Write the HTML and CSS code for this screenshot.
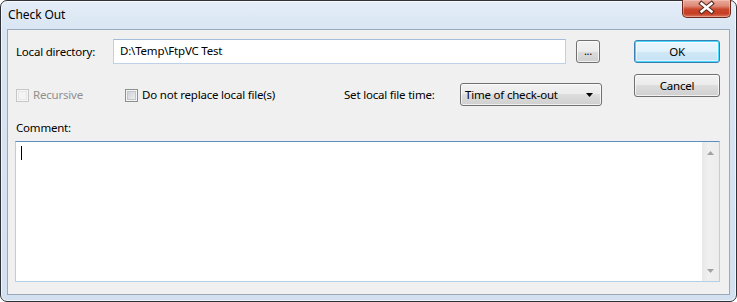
FILE: index.html
```html
<!DOCTYPE html>
<html>
<head>
<meta charset="utf-8">
<link rel="stylesheet" href="styles.css">
</head>
<body>
<div class="window">
  <div class="titlebar">
    <span class="title">Check Out</span>
    <div class="close">
      <svg width="49" height="18" viewBox="0 0 49 18">
        <path d="M19.5 4.5 L29.5 12.5 M29.5 4.5 L19.5 12.5" stroke="#5a2b22" stroke-width="4.6" stroke-linecap="square" fill="none"/>
        <path d="M19.5 4.5 L29.5 12.5 M29.5 4.5 L19.5 12.5" stroke="#ffffff" stroke-width="2.4" stroke-linecap="square" fill="none"/>
      </svg>
    </div>
  </div>
  <div class="client">
    <div class="top">
      <div class="form">
        <div class="row1">
          <span class="lbl-dir">Local directory:</span>
          <div class="input">D:\Temp\FtpVC Test</div>
          <div class="btn browse">...</div>
        </div>
        <div class="row2">
          <span class="check check-rec disabled"><span class="box"></span>Recursive</span>
          <span class="check check-rep"><span class="box"></span>Do not replace local file(s)</span>
          <span class="lbl-time">Set local file time:</span>
          <div class="select">
            <span>Time of check-out</span>
            <svg width="7" height="4" viewBox="0 0 7 4"><path d="M0 0 H7 L3.5 4 Z" fill="#000"/></svg>
          </div>
        </div>
      </div>
      <div class="buttons">
        <div class="btn default">OK</div>
        <div class="btn">Cancel</div>
      </div>
    </div>
    <div class="comment-label">Comment:</div>
    <div class="textarea">
      <div class="text-area-body"><span class="caret"></span></div>
      <div class="scrollbar">
        <svg width="7" height="4" viewBox="0 0 7 4"><path d="M0 4 H7 L3.5 0 Z" fill="#a3a3a3"/></svg>
        <svg width="7" height="4" viewBox="0 0 7 4"><path d="M0 0 H7 L3.5 4 Z" fill="#a3a3a3"/></svg>
      </div>
    </div>
  </div>
</div>
</body>
</html>
```

FILE: styles.css
```css
* { box-sizing: border-box; }
html, body { margin: 0; padding: 0; background: #ffffff; }
body {
  font-family: "Noto Sans", "Open Sans", sans-serif;
  font-size: 11.5px;
  letter-spacing: -0.2px;
  color: #000;
  width: 737px;
  height: 302px;
  overflow: hidden;
}
.window {
  width: 737px;
  height: 302px;
  border: 1px solid #2f3236;
  border-radius: 7px;
  background: linear-gradient(#e4edf8 0px, #d9e5f3 30px, #d2e0f0 100%);
  box-shadow: inset 0 0 0 1px rgba(255,255,255,0.65);
  padding: 0 6px 6px 6px;
  display: flex;
  flex-direction: column;
}
.titlebar {
  height: 28px;
  flex: none;
  display: flex;
  justify-content: space-between;
  align-items: flex-start;
}
.title {
  margin-top: 6px;
  margin-left: 1px;
  font-size: 12px;
  letter-spacing: -0.1px;
  line-height: 16px;
  color: #000;
}
.close {
  width: 49px;
  height: 18px;
  margin-top: -1px;
  margin-right: -1px;
  border: 1px solid #6b2a1d;
  border-top: none;
  border-radius: 0 0 5px 5px;
  background: linear-gradient(#e9aa9c 0%, #df8a76 35%, #c9452b 55%, #c63f24 80%, #d9775d 100%);
  box-shadow: inset 0 0 0 1px rgba(255,210,200,0.45);
  overflow: hidden;
}
.close svg { display: block; margin: -1px 0 0 -1px; }
.client {
  flex: 1;
  border: 1px solid #9aa8ba;
  background: #f0f0f0;
  padding: 0 9px 0 7px;
  display: flex;
  flex-direction: column;
}
.top {
  display: flex;
  padding-top: 9px;
}
.form {
  width: 587px;
  padding-left: 1px;
}
.row1 {
  display: flex;
  align-items: center;
  height: 25px;
}
.lbl-dir { width: 97px; }
.input {
  width: 453px;
  height: 25px;
  border: 1px solid #bdd2e9;
  border-top-color: #a3bcd9;
  background: #fff;
  padding: 0 6px;
  line-height: 22px;
}
.btn {
  height: 23px;
  border: 1px solid #707070;
  border-radius: 3px;
  background: linear-gradient(#f2f2f2 0%, #ebebeb 50%, #dddddd 50%, #cfcfcf 100%);
  box-shadow: inset 0 0 0 1px rgba(255,255,255,0.7);
  display: flex;
  align-items: center;
  justify-content: center;
  line-height: 16px;
}
.browse {
  width: 24px;
  margin-left: 10px;
  font-size: 11px;
  padding-bottom: 2px;
}
.row2 {
  display: flex;
  align-items: center;
  height: 23px;
  margin-top: 19px;
}
.check {
  display: flex;
  align-items: center;
  gap: 4px;
}
.check-rec { width: 109px; }
.check-rep { width: 219px; }
.box {
  width: 13px;
  height: 13px;
  flex: none;
  border: 1px solid #8e8f8f;
  background: linear-gradient(135deg, #c6cad0 0%, #e2e4e7 60%, #f4f4f4 100%);
  box-shadow: inset 0 0 0 1px #f4f4f4, inset 0 0 0 2px #c2c6cc;
  margin-top: 1px;
}
.disabled { color: #8f8f8f; }
.disabled .box {
  border-color: #c6c6c6;
  background: #f4f4f4;
  box-shadow: inset 0 0 0 1px #f7f7f7, inset 0 0 0 2px #e6e6e6;
}
.lbl-time { width: 116px; }
.select {
  width: 142px;
  height: 23px;
  border: 1px solid #707070;
  border-radius: 3px;
  background: linear-gradient(#f2f2f2 0%, #ebebeb 50%, #dddddd 50%, #cfcfcf 100%);
  box-shadow: inset 0 0 0 1px rgba(255,255,255,0.7);
  display: flex;
  align-items: center;
  justify-content: space-between;
  padding: 0 8px 0 4px;
}
.select svg { display: block; }
.buttons {
  margin-left: 32px;
  margin-top: 1px;
  display: flex;
  flex-direction: column;
  gap: 11px;
}
.buttons .btn { width: 86px; }
.btn.default {
  border-color: #3c7fb1;
  box-shadow: inset 0 0 0 1px #48d8fb, inset 0 0 0 2px rgba(255,255,255,0.5);
  background: linear-gradient(#eaf6fd 0%, #e1f1fb 50%, #d1e9f7 50%, #c4e1f4 100%);
}
.comment-label {
  margin-top: 14px;
  line-height: 16px;
  padding-left: 1px;
}
.textarea {
  margin-top: 5px;
  width: 705px;
  height: 141px;
  border: 1px solid #b5cfe7;
  border-top-color: #5b8fc2;
  background: #fff;
  display: flex;
}
.text-area-body {
  flex: 1;
  padding: 4px 0 0 5px;
}
.caret {
  display: block;
  width: 1px;
  height: 14px;
  background: #000;
}
.scrollbar {
  width: 17px;
  background: linear-gradient(90deg, #e8e8e8, #f0f0f0 40%, #ececec);
  display: flex;
  flex-direction: column;
  justify-content: space-between;
  align-items: center;
  padding: 9px 0 8px 0;
}
.scrollbar svg { display: block; }
```
